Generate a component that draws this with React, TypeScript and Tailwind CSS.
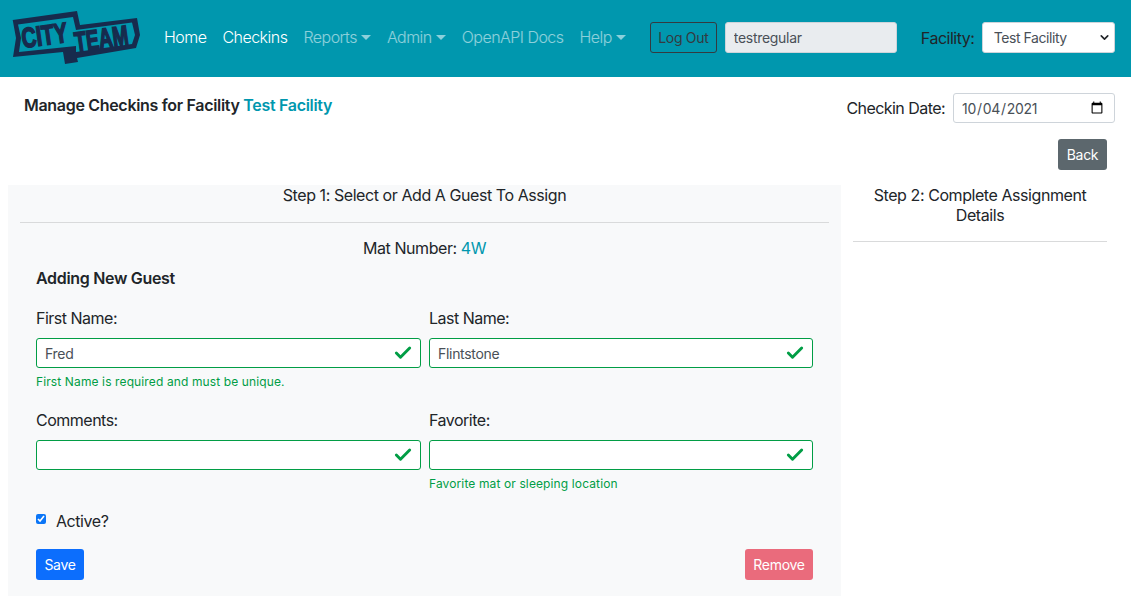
import { Check, ChevronDown } from "lucide-react";

const navLinks = [
  { label: "Home", active: true },
  { label: "Checkins", active: true },
  { label: "Reports", caret: true },
  { label: "Admin", caret: true },
  { label: "OpenAPI Docs" },
  { label: "Help", caret: true },
];

function Logo() {
  return (
    <svg width="130" height="58" viewBox="12 9 130 58" className="shrink-0">
      <path d="M12.7 20 L77 11 L80 25 L137 18 L140 35 L136 48 L77 58 L78 62 L65 64 L63 52 L13 57 L16 38 Z" fill="#172b4d" />
      <path d="M18 24.5 L73 17 L76 30 L132 22.5 L135 35 L132 44 L76 52 L76 46 L19 52 L21 38 Z" fill="#0097ae" />
      <g fontFamily="'Liberation Sans', sans-serif" fontWeight="700" fontSize="28" fill="#172b4d" stroke="#172b4d" strokeWidth="1.6">
        <text transform="translate(23 48) rotate(-8) scale(0.72 1)">CITY</text>
        <text transform="translate(76 52) rotate(-8) scale(0.68 1)">TEAM</text>
      </g>
    </svg>
  );
}

function Field({ label, value, help, wide }: { label: string; value: string; help?: string; wide?: boolean }) {
  return (
    <div className={wide ? "w-[385px]" : "w-[384px]"}>
      <label className="block h-[32px] leading-[24px] mt-[-4px] text-[16px] tracking-[-0.5px] text-[#212529]">{label}</label>
      <div className="relative">
        <input
          readOnly
          value={value}
          className="w-full h-[30px] rounded-[3px] border border-[#019d45] bg-white pl-2 pr-8 text-[14px] tracking-[-0.3px] text-[#495057] outline-none"
        />
        <Check className="absolute right-2 top-[5px] w-[20px] h-[20px] text-[#019d45]" strokeWidth={3.5} />
      </div>
      <div className="h-[21px] mt-[5px] text-[12px] leading-[18px] tracking-[0.12px] text-[#019d45]">{help}</div>
    </div>
  );
}

export default function App() {
  return (
    <div className="w-[1131px] h-[612px] overflow-hidden bg-white font-['Inter','Liberation_Sans',sans-serif] text-[#212529]">
      {/* top nav */}
      <nav className="h-[77px] bg-[#0097ae] flex items-center pl-3 pb-[2px] whitespace-nowrap">
        <Logo />
        <ul className="flex items-center ml-[22px] mb-[1px] gap-[16px] text-[16px] tracking-[-0.53px] font-light">
          {navLinks.map((link) => (
            <li key={link.label} className={link.active ? "text-white" : "text-white/55 flex items-center"}>
              {link.label}
              {link.caret && (
                <span className="inline-block ml-[4px] w-0 h-0 border-x-[5px] border-x-transparent border-t-[5px] border-t-white/55" />
              )}
            </li>
          ))}
        </ul>
        <button className="ml-[24px] w-[67px] h-[31px] rounded-[3px] border border-[#343a40] text-[14px] tracking-[-0.3px] text-[#343a40]">
          Log Out
        </button>
        <input
          readOnly
          value="testregular"
          className="ml-2 w-[172px] h-[31px] rounded-[3px] border border-[#ced4da] bg-[#e9ecef] px-2 text-[14px] tracking-[-0.3px] text-[#495057] outline-none"
        />
        <span className="ml-[24px] w-[53px] text-[16px] tracking-[-0.5px] text-[#212529]">Facility:</span>
        <div className="relative ml-2">
          <select className="appearance-none w-[133px] h-[31px] rounded-[3px] border border-[#ced4da] bg-white pl-[11px] text-[14px] tracking-[-0.45px] text-[#495057] outline-none">
            <option>Test Facility</option>
          </select>
          <ChevronDown className="absolute right-[4px] top-[9px] w-[13px] h-[13px] text-[#212529] pointer-events-none" strokeWidth={3} />
        </div>
      </nav>

      {/* page heading */}
      <div className="h-[108px] relative">
        <div className="flex justify-between pl-6 pr-4">
          <h1 className="mt-[18px] text-[16px] leading-[20px] font-semibold tracking-[-0.31px]">
            Manage Checkins for Facility <span className="text-[#0097ae]">Test Facility</span>
          </h1>
          <div className="flex items-center mt-4 gap-2">
            <span className="text-[16px] tracking-[-0.55px]">Checkin Date:</span>
            <input
              type="date"
              defaultValue="2021-10-04"
              className="w-[162px] h-[30px] rounded-[3px] border border-[#ced4da] bg-white pl-[7px] pr-[8px] text-[14px] tracking-[-0.3px] text-[#495057] outline-none"
            />
          </div>
        </div>
        <div className="flex justify-end pr-6 mt-[16px]">
          <button className="w-[49px] h-[31px] rounded-[3px] bg-[#5c676d] text-[14px] tracking-[-0.3px] text-white">Back</button>
        </div>
      </div>

      <div className="flex pl-2 gap-3">
        {/* step 1 */}
        <div className="w-[833px] h-[411px] bg-[#f8f9fa] px-3">
          <h2 className="text-center text-[16px] leading-[20px] tracking-[-0.43px] pb-[17px] border-b border-[#d9dadb]">
            Step 1: Select or Add A Guest To Assign
          </h2>
          <div className="text-center mt-[15px] text-[16px] leading-[20px] tracking-[-0.43px]">
            Mat Number: <span className="text-[#0097ae]">4W</span>
          </div>
          <div className="px-4">
            <h3 className="mt-[10px] mb-[22px] text-[16px] leading-[20px] font-semibold tracking-[-0.31px]">Adding New Guest</h3>
            <div className="flex gap-2">
              <Field wide label="First Name:" value="Fred" help="First Name is required and must be unique." />
              <Field label="Last Name:" value="Flintstone" />
            </div>
            <div className="flex gap-2 mt-[18px]">
              <Field wide label="Comments:" value="" />
              <Field label="Favorite:" value="" help="Favorite mat or sleeping location" />
            </div>
            <div className="flex items-center mt-[15px]">
              <input type="checkbox" readOnly checked className="w-[10px] h-[10px] accent-[#0b76f7] mb-1" />
              <span className="ml-[10px] text-[16px] leading-[20px] tracking-[-0.43px]">Active?</span>
            </div>
            <div className="flex justify-between mt-[18px]">
              <button className="w-[48px] h-[31px] rounded-[3px] bg-[#0c6efd] text-[14px] tracking-[-0.3px] text-white">Save</button>
              <button className="w-[68px] h-[31px] rounded-[3px] bg-[#ea6b7c] text-[14px] tracking-[-0.3px] text-white">Remove</button>
            </div>
          </div>
        </div>

        {/* step 2 */}
        <div className="w-[254px]">
          <h2 className="text-center text-[16px] leading-[20px] tracking-[-0.43px] pb-4 border-b border-[#d9dadb]">
            Step 2: Complete Assignment Details
          </h2>
        </div>
      </div>
    </div>
  );
}
